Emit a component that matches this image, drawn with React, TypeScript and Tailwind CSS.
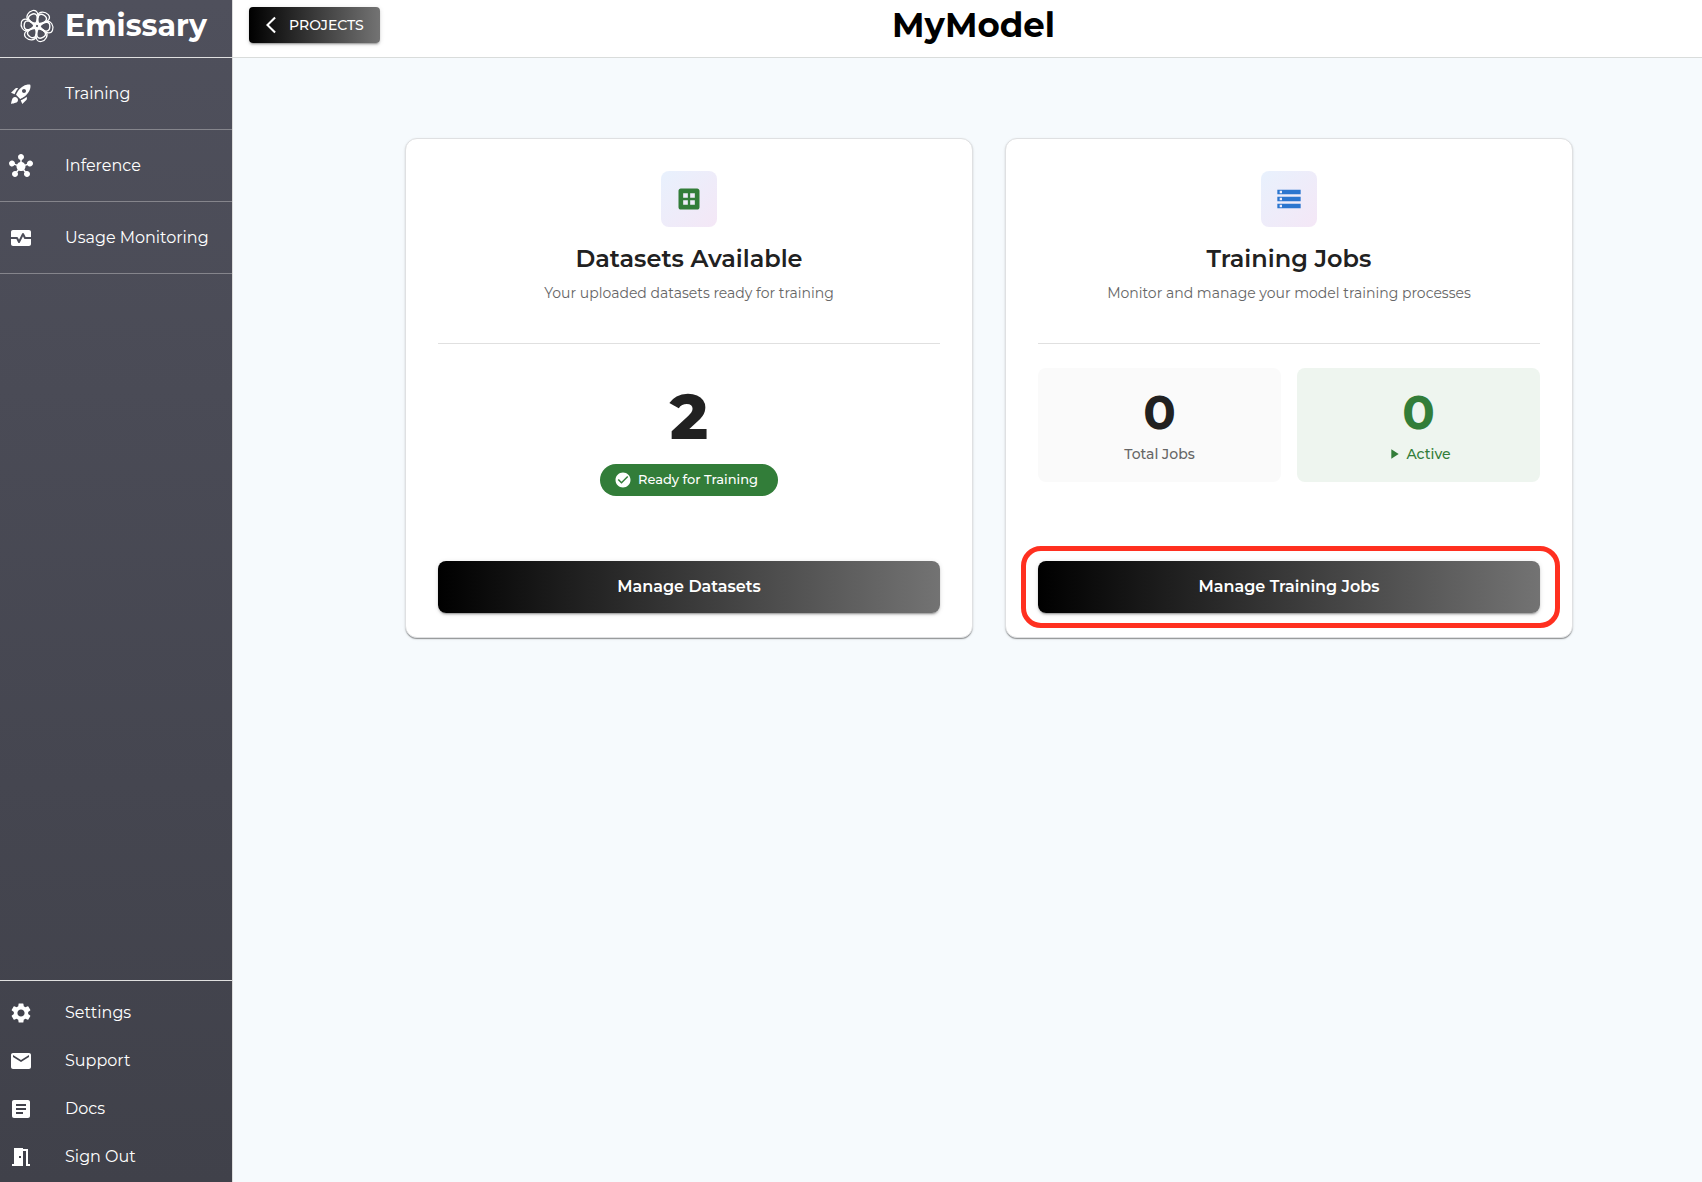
import type { ComponentType, ReactNode } from "react";
import {
  MdArrowBackIosNew,
  MdArticle,
  MdCheckCircle,
  MdDataset,
  MdEmail,
  MdHub,
  MdMeetingRoom,
  MdMonitorHeart,
  MdPlayArrow,
  MdSettings,
  MdStorage,
} from "react-icons/md";

type NavItem = { label: string; icon: ComponentType<{ className?: string }> };

function RocketIcon({ className }: { className?: string }) {
  return (
    <svg viewBox="0 0 24 24" fill="currentColor" className={className} aria-hidden="true">
      <path d="M9.19 6.35c-2.04 2.29-3.44 5.58-3.57 5.89L2 10.69l4.05-4.05c.47-.47 1.15-.68 1.81-.55l1.33.26zM11.17 17s3.74-1.55 5.89-3.7c5.4-5.4 4.5-9.62 4.21-10.57-.95-.3-5.17-1.19-10.57 4.21C8.55 9.09 7 12.83 7 12.83L11.17 17zm6.48-2.19c-2.29 2.04-5.58 3.44-5.89 3.57L13.31 22l4.05-4.05c.47-.47.68-1.15.55-1.81l-.26-1.33zM9 18c0 .83-.34 1.58-.88 2.12C6.94 21.3 2 22 2 22s.7-4.94 1.88-6.12C4.42 15.34 5.17 15 6 15c1.66 0 3 1.34 3 3zm4-9c0-1.1.9-2 2-2s2 .9 2 2-.9 2-2 2-2-.9-2-2z" />
    </svg>
  );
}

const MAIN_LINKS: NavItem[] = [
  { label: "Training", icon: RocketIcon },
  { label: "Inference", icon: MdHub },
  { label: "Usage Monitoring", icon: MdMonitorHeart },
];

const FOOTER_LINKS: NavItem[] = [
  { label: "Settings", icon: MdSettings },
  { label: "Support", icon: MdEmail },
  { label: "Docs", icon: MdArticle },
  { label: "Sign Out", icon: MdMeetingRoom },
];

const PETALS = [0, 60, 120, 180, 240, 300];

function Logo() {
  return (
    <svg viewBox="-18 -18 36 36" className="size-9 shrink-0" fill="none" stroke="white" aria-hidden="true">
      {PETALS.map((angle) => (
        <g key={angle} transform={`rotate(${angle + 34})`}>
          <path d="M0 -3C-2.5 -4.5 -4.6 -7.5 -4.4 -10C-4 -13.6 3.6 -14 4.4 -10C4.6 -7.5 2.5 -4.5 0 -3Z" strokeWidth="1.4" />
          <path d="M-5.5 -9C-6.5 -13.5 -2 -16.8 3 -15.8C7 -14.8 6.8 -10.5 4.6 -7" strokeWidth="1.2" />
          <path d="M0 -1V-9" strokeWidth="1.8" transform="rotate(-30)" />
        </g>
      ))}
      <circle r="2.6" strokeWidth="1.6" />
    </svg>
  );
}

function NavLink({ item, className }: { item: NavItem; className: string }) {
  const Icon = item.icon;
  return (
    <a href="#" className={`flex items-center pl-[9px] text-base text-white ${className}`}>
      <Icon className="size-6 shrink-0" />
      <span className="ml-8">{item.label}</span>
    </a>
  );
}

function Sidebar() {
  return (
    <aside className="flex w-[233px] shrink-0 flex-col border-r border-[#dcdcdc] bg-linear-to-b from-[#4f505c] to-[#40414a]">
      <div className="flex h-[58px] items-center gap-2.5 border-b border-[#e0e0e0] pb-1.5 pl-[19px] text-white">
        <Logo />
        <span className="text-[30px] leading-9 font-bold">Emissary</span>
      </div>
      <nav>
        {MAIN_LINKS.map((item) => (
          <NavLink key={item.label} item={item} className="h-[72px] border-b border-[#85858c]" />
        ))}
      </nav>
      <nav className="mt-auto border-t border-[#e0e0e0] pt-2 pb-px">
        {FOOTER_LINKS.map((item) => (
          <NavLink key={item.label} item={item} className="h-12" />
        ))}
      </nav>
    </aside>
  );
}

type PanelProps = {
  icon: ReactNode;
  title: string;
  subtitle: string;
  action: string;
  highlighted?: boolean;
  children: ReactNode;
};

function Panel({ icon, title, subtitle, action, highlighted, children }: PanelProps) {
  return (
    <section className="flex min-h-[500px] flex-col rounded-xl border border-[#dfe0e2] bg-white px-8 pt-8 pb-6 shadow-[0_2px_1px_-1px_rgba(0,0,0,0.25),0_1px_1px_rgba(0,0,0,0.16),0_1px_3px_rgba(0,0,0,0.1)]">
      <div className="flex flex-col items-center border-b border-[#e0e0e0] pb-10 text-center">
        <div className="flex size-14 items-center justify-center rounded-lg bg-linear-135 from-[#e8f1fd] to-[#f4e7f6]">
          {icon}
        </div>
        <h2 className="mt-4 text-2xl font-semibold text-[#212121]">{title}</h2>
        <p className="mt-2 text-sm text-[#666666]">{subtitle}</p>
      </div>
      <div className="pt-6 pb-16">{children}</div>
      <div className="relative mt-auto">
        <button
          type="button"
          className="h-[52px] w-full rounded-lg bg-linear-to-r/srgb from-black to-[#737373] text-base font-semibold text-white shadow-[0_3px_1px_-2px_rgba(0,0,0,0.2),0_2px_2px_rgba(0,0,0,0.14),0_1px_5px_rgba(0,0,0,0.12)]"
        >
          {action}
        </button>
        {highlighted && (
          <div className="pointer-events-none absolute -inset-y-[15px] -right-5 -left-[17px] rounded-[20px] border-[5px] border-[#ff3020]" />
        )}
      </div>
    </section>
  );
}

export default function App() {
  return (
    <div className="flex min-h-screen bg-[#f6fafd] font-['Montserrat','Inter',sans-serif]">
      <Sidebar />
      <div className="flex-1">
        <header className="grid h-[58px] grid-cols-[1fr_auto_1fr] items-center border-b border-[#d9dcdb] bg-white pr-1 pb-2 pl-4">
          <button
            type="button"
            className="flex h-9 w-[131px] items-center gap-2 rounded bg-linear-to-r/srgb from-black to-[#737373] pl-3 text-sm font-medium text-white shadow-[0_3px_1px_-2px_rgba(0,0,0,0.2),0_2px_2px_rgba(0,0,0,0.14),0_1px_5px_rgba(0,0,0,0.12)]"
          >
            <MdArrowBackIosNew className="size-5" />
            PROJECTS
          </button>
          <h1 className="text-[34px] leading-10 font-bold text-black">MyModel</h1>
        </header>

        <main className="pt-20 pr-4 pl-[59px]">
          <div className="mx-auto grid max-w-[1168px] grid-cols-2 gap-8">
            <Panel
              icon={<MdDataset className="size-7 text-[#327d39]" />}
              title="Datasets Available"
              subtitle="Your uploaded datasets ready for training"
              action="Manage Datasets"
            >
              <div className="flex flex-col items-center gap-4 pt-4">
                <span className="text-[64px] leading-16 font-extrabold text-[#212121]">2</span>
                <span className="flex h-8 items-center gap-1.5 rounded-full bg-[#327d39] pr-5 pl-3.5 text-[13px] font-medium text-white">
                  <MdCheckCircle className="size-4.5" />
                  Ready for Training
                </span>
              </div>
            </Panel>
            <Panel
              icon={<MdStorage className="size-7 text-[#2b76cf]" />}
              title="Training Jobs"
              subtitle="Monitor and manage your model training processes"
              action="Manage Training Jobs"
              highlighted
            >
              <div className="grid grid-cols-2 gap-4 text-center">
                <div className="rounded-lg bg-[#fafafa] pt-4 pb-[18px]">
                  <div className="text-5xl leading-14 font-bold text-[#212121]">0</div>
                  <div className="mt-1 text-sm font-medium text-[#666666]">Total Jobs</div>
                </div>
                <div className="rounded-lg bg-[#eef5ef] pt-4 pb-[18px] text-[#327d39]">
                  <div className="text-5xl leading-14 font-bold">0</div>
                  <div className="mt-1 flex items-center justify-center gap-1 text-sm font-medium">
                    <MdPlayArrow className="size-4" />
                    Active
                  </div>
                </div>
              </div>
            </Panel>
          </div>
        </main>
      </div>
    </div>
  );
}
